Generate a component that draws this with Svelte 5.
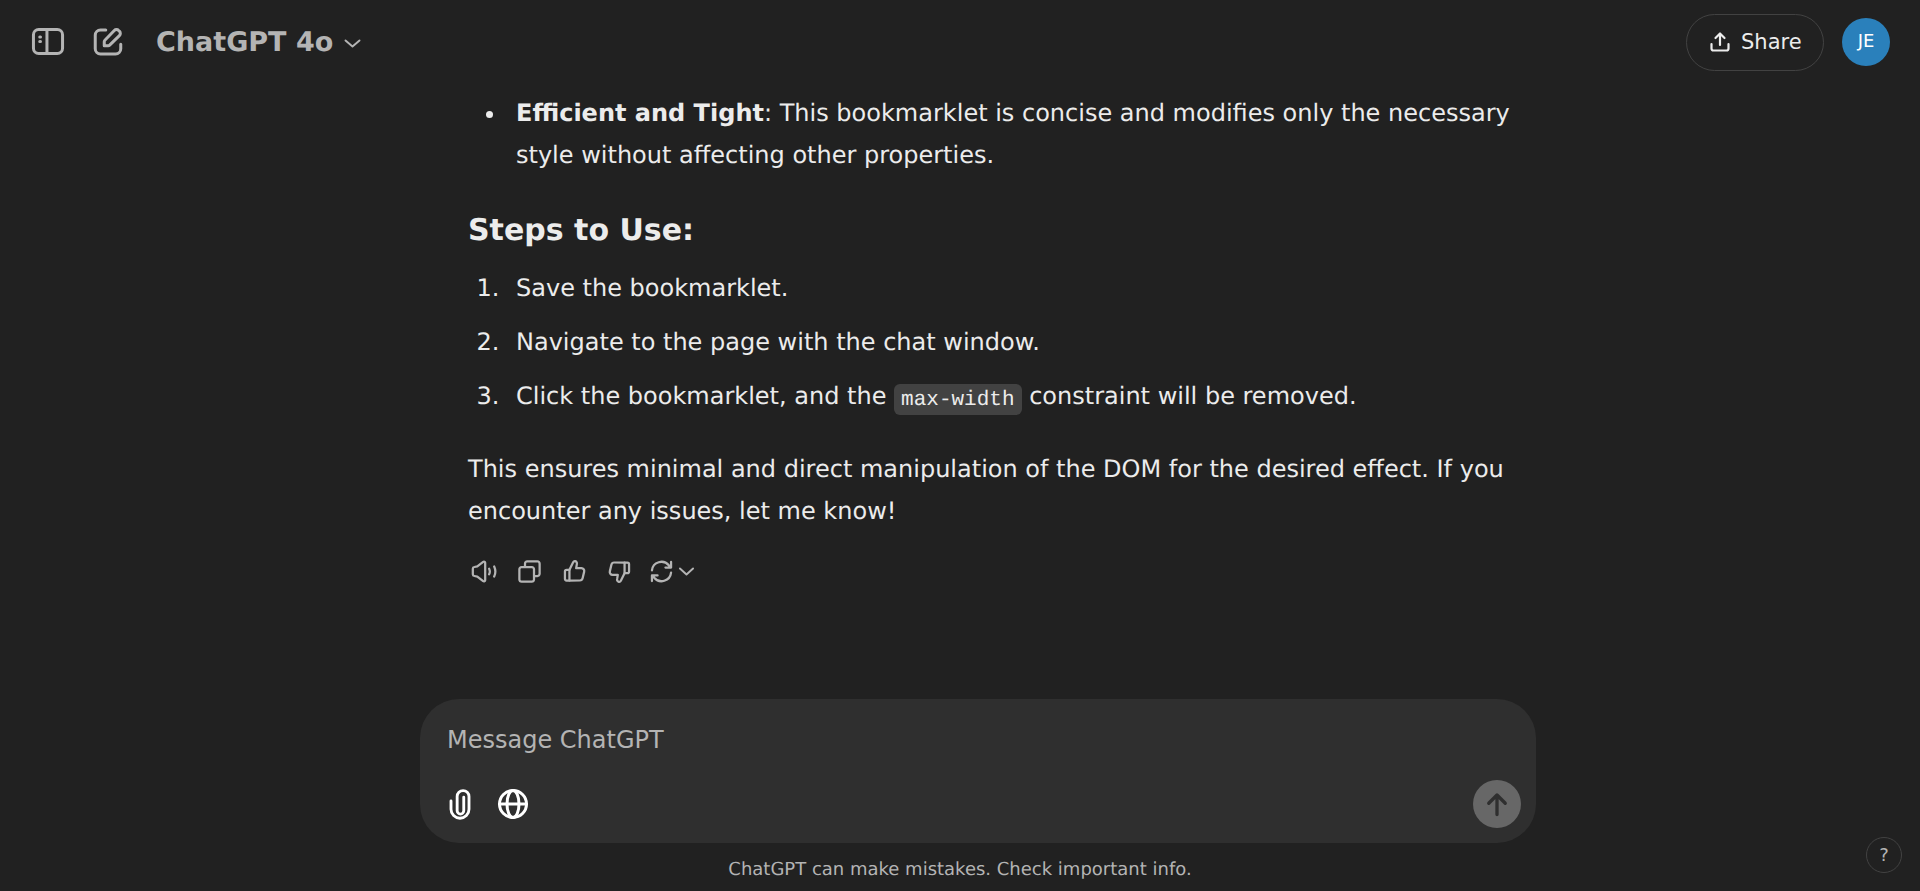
<script>
  let message = '';
</script>

<style>
  :global(body) {
    margin: 0;
    background: #212121;
  }

  .page {
    position: relative;
    display: flex;
    flex-direction: column;
    height: 100vh;
    overflow: hidden;
    background: #212121;
    color: #ececec;
    font-family: "DejaVu Sans", sans-serif;
    font-size: 24px;
    line-height: 42px;
    text-rendering: geometricPrecision;
  }

  svg {
    display: block;
    flex: none;
    fill: none;
    stroke: currentColor;
    stroke-linecap: round;
    stroke-linejoin: round;
  }

  .header {
    flex: none;
    display: flex;
    align-items: center;
    height: 84px;
    padding: 0 30px;
    color: #b4b4b4;
  }

  .header-left {
    display: flex;
    align-items: center;
    flex: 1;
  }

  .header-left .compose {
    margin-left: 24px;
  }

  .model {
    display: flex;
    align-items: center;
    margin-left: 30px;
    padding-top: 2px;
    font-size: 27px;
    font-weight: 700;
  }

  .model svg {
    margin-left: 9px;
  }

  .share {
    display: flex;
    align-items: center;
    gap: 9px;
    box-sizing: border-box;
    height: 57px;
    width: 138px;
    padding: 0 0 0 21px;
    margin-right: 18px;
    border: 1.5px solid #424242;
    border-radius: 29px;
    background: none;
    color: #ececec;
    font: inherit;
    font-size: 21px;
  }

  .avatar {
    display: flex;
    align-items: center;
    justify-content: center;
    width: 48px;
    height: 48px;
    border-radius: 50%;
    background: #2a80bb;
    color: #fff;
    font-size: 18px;
  }

  .thread {
    flex: 1;
    min-height: 0;
    width: 1152px;
    margin: 0 auto;
    box-sizing: border-box;
    padding: 8px 0 0 84px;
  }

  ul,
  ol {
    margin: 0;
    padding-left: 39px;
  }

  li {
    padding-left: 9px;
  }

  ol li {
    margin-bottom: 12px;
  }

  ol li:last-child {
    margin-bottom: 0;
  }

  ul li::marker {
    color: #ececec;
  }

  h3 {
    margin: 31px 0 12px;
    font-size: 30px;
    line-height: 48px;
    font-weight: 700;
  }

  p {
    margin: 31px 0 0;
  }

  code {
    padding: 4.5px 7px 3.5px;
    border-radius: 6px;
    background: #424242;
    font-family: "Liberation Mono", monospace;
    font-size: 21px;
    font-weight: 500;
    line-height: 1;
  }

  .actions {
    display: flex;
    align-items: center;
    margin: 18px 0 0 2px;
    height: 42px;
    color: #b4b4b4;
  }

  .actions button {
    display: flex;
    padding: 0;
    margin-right: 18px;
    border: none;
    background: none;
    color: inherit;
  }

  .actions .speaker {
    margin-right: 19px;
  }

  .actions .regen {
    align-items: center;
    margin: 0 0 0 -3px;
    gap: 1px;
  }

  .composer {
    flex: none;
    box-sizing: border-box;
    width: 1116px;
    height: 144px;
    margin-left: 420px;
    padding: 20px 15px 15px 27px;
    display: flex;
    flex-direction: column;
    justify-content: space-between;
    border-radius: 39px;
    background: #2f2f2f;
  }

  .composer input {
    display: block;
    width: 100%;
    height: 42px;
    padding: 0;
    border: none;
    outline: none;
    background: none;
    color: #ececec;
    font: inherit;
  }

  .composer input::placeholder {
    color: #b4b4b4;
    opacity: 1;
  }

  .tools {
    display: flex;
    align-items: center;
    margin-left: -5px;
    color: #fff;
  }

  .tools .globe {
    margin-left: 17px;
  }

  .send {
    display: flex;
    align-items: center;
    justify-content: center;
    width: 48px;
    height: 48px;
    margin-left: auto;
    padding: 0;
    border: none;
    border-radius: 50%;
    background: #676767;
    color: #2f2f2f;
  }

  .note {
    flex: none;
    height: 48px;
    line-height: 53px;
    text-align: center;
    font-size: 18px;
    color: #b4b4b4;
  }

  .help {
    position: absolute;
    right: 18px;
    bottom: 18px;
    box-sizing: border-box;
    width: 36px;
    height: 36px;
    padding: 0;
    border: 1px solid #424242;
    border-radius: 50%;
    background: none;
    color: #b4b4b4;
    font: inherit;
    font-size: 18px;
    line-height: 32px;
    text-align: center;
  }
</style>

<div class="page">
  <header class="header">
    <div class="header-left">
      <svg width="36" height="36" viewBox="0 0 24 24" stroke-width="2">
        <rect x="2.3" y="3.7" width="19.4" height="16" rx="3.5" />
        <path d="M11.3 3.7v16" />
        <path d="M6.5 8.7h.5M6.5 11.7h.5" />
      </svg>
      <svg class="compose" width="36" height="36" viewBox="0 0 24 24" stroke-width="2">
        <path d="M10.5 4H7A3.5 3.5 0 0 0 3.5 7.5V16.5A3.5 3.5 0 0 0 7 20h10a3.5 3.5 0 0 0 3.5-3.5V13.5" />
        <path d="M9.5 14.5v-2.7c0-.4.2-.8.4-1l6.3-6.5a2 2 0 0 1 2.9 0l.5.5a2 2 0 0 1 0 2.9l-6.5 6.4c-.3.3-.6.4-1 .4z" />
      </svg>
      <div class="model">
        ChatGPT 4o
        <svg width="21" height="21" viewBox="0 0 24 24" stroke-width="2.2"><path d="M4 8.5l8 7 8-7" /></svg>
      </div>
    </div>
    <button class="share">
      <svg width="24" height="24" viewBox="0 0 24 24" stroke-width="2.2">
        <path d="M12 15V4M7.5 8L12 3.5 16.5 8" />
        <path d="M3.5 14v4.5a2 2 0 0 0 2 2h13a2 2 0 0 0 2-2V14" />
      </svg>
      Share
    </button>
    <div class="avatar">JE</div>
  </header>

  <main class="thread">
    <ul>
      <li><strong>Efficient and Tight</strong>: This bookmarklet is concise and modifies only the necessary style without affecting other properties.</li>
    </ul>
    <h3>Steps to Use:</h3>
    <ol>
      <li>Save the bookmarklet.</li>
      <li>Navigate to the page with the chat window.</li>
      <li>Click the bookmarklet, and the <code>max-width</code> constraint will be removed.</li>
    </ol>
    <p>This ensures minimal and direct manipulation of the DOM for the desired effect. If you encounter any issues, let me know!</p>
    <div class="actions">
      <button class="speaker" aria-label="Read aloud">
        <svg width="27" height="27" viewBox="0 0 24 24" stroke-width="2">
          <path d="M2.5 9.5v5c0 .8.6 1.4 1.4 1.5l2.6.6 5.2 4c.7.5 1.8.1 1.8-.8V4.2c0-.9-1.1-1.3-1.8-.8l-5.2 4-2.6.6c-.8.1-1.4.7-1.4 1.5z" />
          <path d="M17 9.5c.8 1.6.8 3.4 0 5M21.5 7.5c1.4 3 1.4 6 0 9" />
        </svg>
      </button>
      <button aria-label="Copy">
        <svg width="27" height="27" viewBox="0 0 24 24" style="stroke:none">
          <path fill="currentColor" fill-rule="evenodd" clip-rule="evenodd" d="M7 5C7 3.34315 8.34315 2 10 2H19C20.6569 2 22 3.34315 22 5V14C22 15.6569 20.6569 17 19 17H17V19C17 20.6569 15.6569 22 14 22H5C3.34315 22 2 20.6569 2 19V10C2 8.34315 3.34315 7 5 7H7V5ZM9 7H14C15.6569 7 17 8.34315 17 10V15H19C19.5523 15 20 14.5523 20 14V5C20 4.44772 19.5523 4 19 4H10C9.44772 4 9 4.44772 9 5V7ZM5 9C4.44772 9 4 9.44772 4 10V19C4 19.5523 4.44772 20 5 20H14C14.5523 20 15 19.5523 15 19V10C15 9.44772 14.5523 9 14 9H5Z" />
        </svg>
      </button>
      <button aria-label="Good response">
        <svg width="27" height="27" viewBox="0 0 24 24" stroke-width="2">
          <path d="M7.5 10.5V20H5a1.5 1.5 0 0 1-1.5-1.5V12A1.5 1.5 0 0 1 5 10.5h2.5z" />
          <path d="M7.5 10.5l3.3-6.7c.4-.8 1-1.2 1.8-1 1.2.3 1.8 1.4 1.5 2.6L13.5 9h4.7a2.5 2.5 0 0 1 2.4 3.1l-1.4 6a2.5 2.5 0 0 1-2.4 1.9H7.5" />
        </svg>
      </button>
      <button aria-label="Bad response">
        <svg width="27" height="27" viewBox="0 0 24 24" stroke-width="2">
          <g transform="rotate(180 12 12)">
            <path d="M7.5 10.5V20H5a1.5 1.5 0 0 1-1.5-1.5V12A1.5 1.5 0 0 1 5 10.5h2.5z" />
            <path d="M7.5 10.5l3.3-6.7c.4-.8 1-1.2 1.8-1 1.2.3 1.8 1.4 1.5 2.6L13.5 9h4.7a2.5 2.5 0 0 1 2.4 3.1l-1.4 6a2.5 2.5 0 0 1-2.4 1.9H7.5" />
          </g>
        </svg>
      </button>
      <button class="regen" aria-label="Regenerate">
        <svg width="27" height="27" viewBox="0 0 24 24" stroke-width="2">
          <path d="M3.5 11a8.5 8.5 0 0 1 15-4.5l1.5 2M20.5 3.5v5h-5" />
          <path d="M20.5 13a8.5 8.5 0 0 1-15 4.5L4 15.5M3.5 20.5v-5h5" />
        </svg>
        <svg width="21" height="21" viewBox="0 0 24 24" stroke-width="2.2"><path d="M4.5 8.5l7.5 7 7.5-7" /></svg>
      </button>
    </div>
  </main>

  <form class="composer" on:submit|preventDefault>
    <input type="text" placeholder="Message ChatGPT" bind:value={message} />
    <div class="tools">
      <svg width="36" height="36" viewBox="0 0 24 24" stroke-width="1.9">
        <path d="M14.5 7.5v9a2.2 2.2 0 0 1-4.4 0V7a3.95 3.95 0 0 1 7.9 0v8.5a6 6 0 0 1-12 0V10" />
      </svg>
      <svg class="globe" width="36" height="36" viewBox="0 0 24 24" stroke-width="2">
        <circle cx="12" cy="12" r="9" />
        <ellipse cx="12" cy="12" rx="4" ry="9" />
        <path d="M3 12h18" />
      </svg>
      <button class="send" type="submit" aria-label="Send">
        <svg width="36" height="36" viewBox="0 0 24 24" stroke-width="2.2"><path d="M12 19V6M6.5 11.5L12 6l5.5 5.5" /></svg>
      </button>
    </div>
  </form>

  <div class="note">ChatGPT can make mistakes. Check important info.</div>
  <button class="help">?</button>
</div>
